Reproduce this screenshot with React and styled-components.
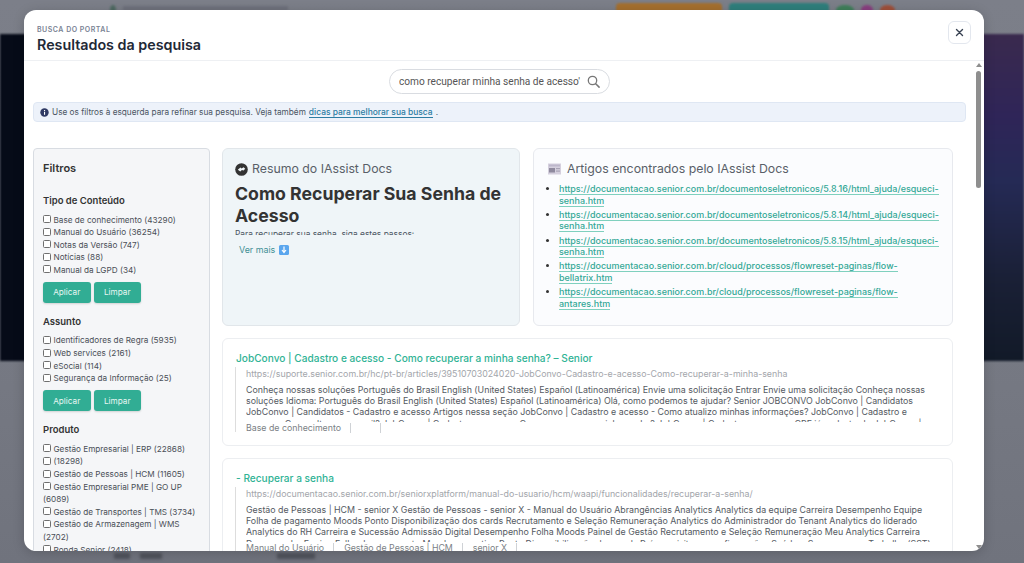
import React from 'react'
import styled, { createGlobalStyle } from 'styled-components'

const GlobalStyle = createGlobalStyle`
html, body {
    margin:0;
    padding:0;
    height:100%;
    overflow:hidden;
    font-family:Inter, "Liberation Sans", sans-serif;
}
* { box-sizing:border-box; }
`

const Page = styled.div`
position:relative;
width:1024px;
height:563px;
display:flex;
flex-direction:column;
background:linear-gradient(180deg,#7c7f89 0%,#787b85 50%,#70737d 100%);
overflow:hidden;
`
const TopBar = styled.div`
height:34px;
flex:none;
display:flex;
justify-content:space-between;
padding:0 129px 0 110px;
filter:blur(1px);
`
const TopGroup = styled.div`
display:flex;
gap:7px;
`
const TopButton = styled.div`
width:${p => p.$w}px;
height:${p => p.$w > 40 ? 14 : 10}px;
margin-top:${p => p.$w > 40 ? 3 : 5}px;
border-radius:${p => p.$w > 40 ? '4px' : '50%'};
background:${p => p.$c};
`
const TopHint = styled.div`
width:165px;
height:5px;
margin-top:6px;
background:#6f727c;
`
const Hero = styled.div`
height:327px;
flex:none;
background:linear-gradient(180deg,#3a2a4e 0%,#2f2558 25%,#252a55 45%,#1a2036 75%,#121a28 100%);
position:relative;
filter:blur(1px);
&::before {
    content:'';
    position:absolute;
    left:0;
    top:0;
    bottom:0;
    width:60px;
    background:#060b18;
}
`
const BottomHints = styled.div`
margin-top:192px;
padding-left:114px;
display:flex;
gap:10px;
filter:blur(1.5px);
`
const Hint = styled.div`
width:${p => p.$w}px;
height:6px;
margin-left:${p => p.$ml || 0}px;
background:#50535c;
`
const Overlay = styled.div`
position:absolute;
left:24px;
top:10px;
width:960px;
height:541px;
background:#fff;
border-radius:12px;
box-shadow:0 2px 12px rgba(0,0,0,.18);
display:flex;
flex-direction:column;
overflow:hidden;
`
const ModalHeader = styled.header`
height:51px;
flex:none;
display:flex;
align-items:flex-start;
justify-content:space-between;
padding:15px 13px 0 13px;
border-bottom:1px solid #eef0f3;
`
const Eyebrow = styled.div`
font-size:7px;
font-weight:600;
letter-spacing:.5px;
color:#7a8394;
line-height:9px;
`
const ModalTitle = styled.h2`
margin:2px 0 0;
font-size:14.3px;
line-height:18px;
font-weight:600;
color:#1f2937;
`
const CloseButton = styled.button`
width:23px;
height:23px;
margin:-4px 0 0;
padding:0;
display:flex;
align-items:center;
justify-content:center;
background:#fff;
border:1px solid #e3e7ee;
border-radius:6px;
color:#374151;
`
const ModalBody = styled.div`
flex:1;
min-height:0;
display:flex;
`
const Scrolled = styled.div`
flex:1;
min-width:0;
overflow:hidden;
padding:8px 0 0 9px;
`
const Scrollbar = styled.div`
width:10px;
flex:none;
display:flex;
flex-direction:column;
align-items:center;
justify-content:space-between;
padding:2px 1px 2px 0;
`
const ScrollThumb = styled.div`
width:5.5px;
height:117px;
margin-top:4px;
background:#8e8e8e;
border-radius:3px;
`
const ScrollCol = styled.div`
display:flex;
flex-direction:column;
align-items:center;
`
const Arrow = styled.div`
width:0;
height:0;
border-left:3px solid transparent;
border-right:3px solid transparent;
${p => p.$down ? 'border-top:4px solid #8e8e8e;' : 'border-bottom:4px solid #8e8e8e;'}
`
const SearchRow = styled.div`
display:flex;
justify-content:center;
padding-right:8px;
`
const SearchBox = styled.div`
width:221px;
height:25px;
display:flex;
align-items:center;
justify-content:space-between;
padding:0 9px 0 9px;
border:1px solid #d9dce1;
border-radius:13px;
background:#fff;
`
const SearchText = styled.span`
font-family:Roboto, "Liberation Sans", sans-serif;
font-size:10.15px;
color:#555;
white-space:nowrap;
overflow:hidden;
width:184px;
`
const Notice = styled.div`
margin-top:8px;
width:933px;
height:20px;
display:flex;
align-items:center;
gap:3px;
padding-left:6px;
background:#edf2fa;
border:1px solid #dfe7f3;
border-radius:4px;
font-size:8.25px;
color:#4b5563;
`
const NoticeLink = styled.a`
color:#2d7da3;
font-size:8.45px;
font-weight:500;
border-bottom:1px solid #2d7da3;
line-height:10px;
`
const Columns = styled.div`
margin-top:26px;
display:flex;
align-items:flex-start;
`
const Sidebar = styled.aside`
width:177px;
height:500px;
flex:none;
padding:11px 9px;
background:#f5f6f8;
border:1px solid #d8dce2;
border-radius:4px;
`
const SideTitle = styled.div`
font-size:11px;
line-height:17px;
font-weight:600;
color:#333;
margin-bottom:17px;
`
const GroupTitle = styled.div`
font-size:9.5px;
line-height:13px;
font-weight:600;
color:#333;
margin-bottom:6.5px;
`
const FilterGroup = styled.section`
margin-bottom:12px;
`
const FilterRow = styled.label`
display:block;
font-size:8.2px;
line-height:12.6px;
color:#4a4f57;
`
const Box = styled.span`
display:inline-block;
width:8px;
height:8px;
margin-right:2.5px;
vertical-align:-0.5px;
background:#fff;
border:1px solid #6f6f6f;
border-radius:1.5px;
`
const ButtonRow = styled.div`
display:flex;
gap:3px;
margin-top:5.5px;
`
const GreenButton = styled.button`
width:47.5px;
height:21px;
padding:0;
background:#31ad94;
border:0;
border-radius:3px;
box-shadow:0 1px 2px rgba(0,0,0,.15);
color:#e8f7f3;
font-family:inherit;
font-size:8.2px;
`
const Main = styled.div`
margin-left:12px;
width:731px;
flex:none;
display:flex;
flex-direction:column;
gap:12px;
`
const TopCards = styled.div`
display:flex;
gap:13px;
`
const SummaryCard = styled.div`
width:298px;
height:178px;
flex:none;
padding:9px 12px;
background:#eff5f8;
border:1px solid #e1e6ea;
border-radius:6px;
overflow:hidden;
`
const ArticlesCard = styled.div`
width:420px;
height:178px;
flex:none;
padding:9px 11px;
background:#fbfcfe;
border:1px solid #e7e9ee;
border-radius:6px;
`
const CardHeading = styled.div`
display:flex;
align-items:center;
gap:${p => p.$gap || 4}px;
padding-left:${p => p.$indent || 0}px;
font-size:12.3px;
line-height:22px;
color:#595f68;
`
const SummaryTitle = styled.h3`
margin:3px 0 0;
font-size:17.7px;
line-height:22px;
font-weight:700;
color:#333;
`
const SummaryClip = styled.div`
height:6px;
margin-top:2px;
overflow:hidden;
font-size:8.4px;
line-height:11px;
color:#4b5563;
`
const SeeMore = styled.div`
display:flex;
align-items:center;
gap:4px;
margin:9px 0 0 4px;
font-size:8.9px;
color:#3f8f95;
`
const ArrowBadge = styled.span`
width:10px;
height:10px;
border-radius:1.5px;
background:#5aa6ee;
display:flex;
align-items:center;
justify-content:center;
`
const LinkList = styled.ul`
margin:3px 0 0;
padding:0 0 0 14px;
font-size:8.97px;
line-height:11.5px;
color:#333;
`
const LinkItem = styled.li`
margin-bottom:2.75px;
`
const ResultLink = styled.a`
color:#33a896;
font-weight:500;
border-bottom:1px solid #7fd0be;
`
const ResultCard = styled.article`
width:731px;
height:108px;
flex:none;
padding:11px 13px 0;
background:#fff;
border:1px solid #eceef1;
border-radius:6px;
`
const ResultTitle = styled.div`
font-size:10.15px;
line-height:16px;
font-weight:500;
color:#30b395;
white-space:nowrap;
`
const ResultBody = styled.div`
margin:1px 0 0 -1px;
padding-left:10px;
height:65px;
border-left:1px solid #ddd;
`
const ResultUrl = styled.div`
font-size:8.84px;
line-height:14px;
color:#a3a6ab;
white-space:nowrap;
`
const Snippet = styled.div`
margin-top:3px;
height:38px;
overflow:hidden;
font-size:8.83px;
line-height:11.2px;
color:#555a62;
`
const Tags = styled.div`
display:flex;
height:10px;
margin-top:1px;
font-size:8.8px;
line-height:10px;
color:#7b7f85;
`
const Tag = styled.span`
padding-right:9px;
margin-right:10px;
border-right:1px solid #cfd2d6;
min-height:10px;
white-space:nowrap;
`
const EmptyTag = styled(Tag)`
margin-right:0;
padding-right:19px;
`

const filters = {
    tipo: ['Base de conhecimento (43290)', 'Manual do Usuário (36254)', 'Notas da Versão (747)', 'Notícias (88)', 'Manual da LGPD (34)'],
    assunto: ['Identificadores de Regra (5935)', 'Web services (2161)', 'eSocial (114)', 'Segurança da Informação (25)'],
    produto: ['Gestão Empresarial | ERP (22868)', '(18298)', 'Gestão de Pessoas | HCM (11605)', 'Gestão Empresarial PME | GO UP (6089)', 'Gestão de Transportes | TMS (3734)', 'Gestão de Armazenagem | WMS (2702)', 'Ronda Senior (2418)'],
}

const links = [
    ['https://documentacao.senior.com.br/documentoseletronicos/5.8.16/html_ajuda/esqueci-', 'senha.htm'],
    ['https://documentacao.senior.com.br/documentoseletronicos/5.8.14/html_ajuda/esqueci-', 'senha.htm'],
    ['https://documentacao.senior.com.br/documentoseletronicos/5.8.15/html_ajuda/esqueci-', 'senha.htm'],
    ['https://documentacao.senior.com.br/cloud/processos/flowreset-paginas/flow-', 'bellatrix.htm'],
    ['https://documentacao.senior.com.br/cloud/processos/flowreset-paginas/flow-', 'antares.htm'],
]

const FilterBlock = ({title, items, actions}) => (
    <FilterGroup>
        <GroupTitle>{title}</GroupTitle>
        {items.map(item => <FilterRow key={item}><Box />{item}</FilterRow>)}
        {actions && (
            <ButtonRow>
                <GreenButton>Aplicar</GreenButton>
                <GreenButton>Limpar</GreenButton>
            </ButtonRow>
        )}
    </FilterGroup>
)

const App = () => {
    return (
        <>
        <GlobalStyle />
        <Page>
            <TopBar>
                <TopGroup>
                    <TopButton $w={6} $c="#4f6b62" />
                    <TopHint />
                </TopGroup>
                <TopGroup>
                    <TopButton $w={106} $c="#a5702f" />
                    <TopButton $w={100} $c="#2f7f7c" />
                    <TopButton $w={18} $c="#3f7f5a" />
                    <TopButton $w={12} $c="#8a3f80" />
                    <TopButton $w={15} $c="#a0503a" />
                </TopGroup>
            </TopBar>
            <Hero />
            <BottomHints>
                <Hint $w={16} />
                <Hint $w={22} />
                <Hint $w={38} $ml={105} />
            </BottomHints>
            <Overlay>
                <ModalHeader>
                    <div>
                        <Eyebrow>BUSCA DO PORTAL</Eyebrow>
                        <ModalTitle>Resultados da pesquisa</ModalTitle>
                    </div>
                    <CloseButton aria-label="Fechar">
                        <svg width="9" height="9" viewBox="0 0 9 9"><path d="M1.5 1.5l6 6M7.5 1.5l-6 6" stroke="currentColor" strokeWidth="1.4" strokeLinecap="round"/></svg>
                    </CloseButton>
                </ModalHeader>
                <ModalBody>
                    <Scrolled>
                        <SearchRow>
                            <SearchBox>
                                <SearchText>como recuperar minha senha de acesso'</SearchText>
                                <svg width="13" height="13" viewBox="0 0 13 13" fill="none"><circle cx="5.5" cy="5.5" r="4.2" stroke="#777" strokeWidth="1.3"/><path d="M8.7 8.7l3.4 3.4" stroke="#777" strokeWidth="1.5" strokeLinecap="round"/></svg>
                            </SearchBox>
                        </SearchRow>
                        <Notice>
                            <svg width="9" height="9" viewBox="0 0 9 9"><circle cx="4.5" cy="4.5" r="4.2" fill="#2f3a63"/><rect x="4" y="3.8" width="1.1" height="3" fill="#fff"/><rect x="4" y="2" width="1.1" height="1.1" fill="#fff"/></svg>
                            Use os filtros à esquerda para refinar sua pesquisa. Veja também
                            <NoticeLink>dicas para melhorar sua busca</NoticeLink>.
                        </Notice>
                        <Columns>
                            <Sidebar>
                                <SideTitle>Filtros</SideTitle>
                                <FilterBlock title="Tipo de Conteúdo" items={filters.tipo} actions />
                                <FilterBlock title="Assunto" items={filters.assunto} actions />
                                <FilterBlock title="Produto" items={filters.produto} />
                            </Sidebar>
                            <Main>
                                <TopCards>
                                    <SummaryCard>
                                        <CardHeading>
                                            <svg width="13" height="13" viewBox="0 0 13 13"><circle cx="6.5" cy="6.5" r="6.3" fill="#333"/><path d="M2.8 6.8l2.6-2.4 1.2 1 2-1.2 1.6 1.6-1.6 1.8-1.7-.7-1.6 1.7z" fill="#eff5f8"/></svg>
                                            Resumo do IAssist Docs
                                        </CardHeading>
                                        <SummaryTitle>Como Recuperar Sua Senha de Acesso</SummaryTitle>
                                        <SummaryClip>Para recuperar sua senha, siga estes passos:</SummaryClip>
                                        <SeeMore>
                                            Ver mais
                                            <ArrowBadge>
                                                <svg width="6" height="8" viewBox="0 0 6 8"><path d="M3 .5v5M1 4l2 2.5L5 4" fill="none" stroke="#fff" strokeWidth="1.2"/></svg>
                                            </ArrowBadge>
                                        </SeeMore>
                                    </SummaryCard>
                                    <ArticlesCard>
                                        <CardHeading $gap={6} $indent={3}>
                                            <svg width="13" height="12" viewBox="0 0 13 12"><rect width="13" height="11" y=".5" fill="#d5d0de"/><rect x="1" y="1.5" width="11" height="2" fill="#bdb7cb"/><rect x="1" y="5" width="6" height="4.5" fill="#8f8a9e"/><rect x="8" y="5" width="4" height="1.2" fill="#a8a3b5"/><rect x="8" y="7.5" width="4" height="1.2" fill="#a8a3b5"/></svg>
                                            Artigos encontrados pelo IAssist Docs
                                        </CardHeading>
                                        <LinkList>
                                            {links.map(([first, second], i) => (
                                                <LinkItem key={i}>
                                                    <ResultLink>{first}<br />{second}</ResultLink>
                                                </LinkItem>
                                            ))}
                                        </LinkList>
                                    </ArticlesCard>
                                </TopCards>
                                <ResultCard>
                                    <ResultTitle>JobConvo | Cadastro e acesso - Como recuperar a minha senha? – Senior</ResultTitle>
                                    <ResultBody>
                                        <ResultUrl>https://suporte.senior.com.br/hc/pt-br/articles/39510703024020-JobConvo-Cadastro-e-acesso-Como-recuperar-a-minha-senha</ResultUrl>
                                        <Snippet>
                                            Conheça nossas soluções Português do Brasil English (United States) Español (Latinoamérica) Envie uma solicitação Entrar Envie uma solicitação Conheça nossas<br />
                                            soluções Idioma: Português do Brasil English (United States) Español (Latinoamérica) Olá, como podemos te ajudar? Senior JOBCONVO JobConvo | Candidatos<br />
                                            JobConvo | Candidatos - Cadastro e acesso Artigos nessa seção JobConvo | Cadastro e acesso - Como atualizo minhas informações? JobConvo | Cadastro e<br />
                                            acesso - Como alterar o e-mail? JobConvo | Cadastro e acesso - Como recuperar a minha senha? JobConvo | Cadastro e acesso - CPF já cadastrado JobConvo |
                                        </Snippet>
                                        <Tags>
                                            <Tag>Base de conhecimento</Tag>
                                            <EmptyTag />
                                        </Tags>
                                    </ResultBody>
                                </ResultCard>
                                <ResultCard>
                                    <ResultTitle>- Recuperar a senha</ResultTitle>
                                    <ResultBody>
                                        <ResultUrl>https://documentacao.senior.com.br/seniorxplatform/manual-do-usuario/hcm/waapi/funcionalidades/recuperar-a-senha/</ResultUrl>
                                        <Snippet>
                                            Gestão de Pessoas | HCM - senior X Gestão de Pessoas - senior X - Manual do Usuário Abrangências Analytics Analytics da equipe Carreira Desempenho Equipe<br />
                                            Folha de pagamento Moods Ponto Disponibilização dos cards Recrutamento e Seleção Remuneração Analytics do Administrador do Tenant Analytics do liderado<br />
                                            Analytics do RH Carreira e Sucessão Admissão Digital Desempenho Folha Moods Painel de Gestão Recrutamento e Seleção Remuneração Meu Analytics Carreira<br />
                                            Desempenho Equipe Folha de pagamento Mural corporativo Ponto Disponibilização dos cards Pré-requisitos e configurações Saúde e Segurança no Trabalho (SST)
                                        </Snippet>
                                        <Tags>
                                            <Tag>Manual do Usuário</Tag>
                                            <Tag>Gestão de Pessoas | HCM</Tag>
                                            <Tag>senior X</Tag>
                                        </Tags>
                                    </ResultBody>
                                </ResultCard>
                            </Main>
                        </Columns>
                    </Scrolled>
                    <Scrollbar>
                        <ScrollCol>
                            <Arrow />
                            <ScrollThumb />
                        </ScrollCol>
                        <Arrow $down />
                    </Scrollbar>
                </ModalBody>
            </Overlay>
        </Page>
        </>
    )
}

export default App
